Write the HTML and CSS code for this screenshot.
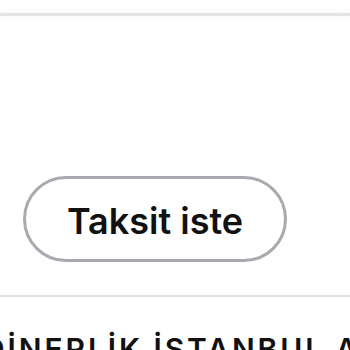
FILE: index.html
```html
<!DOCTYPE html>
<html lang="tr">
<head>
<meta charset="utf-8">
<link rel="stylesheet" href="styles.css">
</head>
<body>
<div class="page">
  <div class="top-rule"></div>
  <div class="card">
    <button class="pill">Taksit iste</button>
  </div>
  <div class="bottom-rule"></div>
  <div class="marquee"><span class="marquee-text">DİNERLİK İSTANBUL ANADOLU</span></div>
</div>
</body>
</html>
```
FILE: styles.css
```css
html, body {
  margin: 0;
  padding: 0;
  background: #ffffff;
  overflow: hidden;
}
.page {
  width: 350px;
  height: 350px;
  overflow: hidden;
  font-family: Inter, "Noto Sans", sans-serif;
}
.top-rule {
  margin-top: 13px;
  height: 3px;
  background: #e4e4e4;
  box-shadow: 0 2px 6px rgba(0,0,0,0.04), 0 -2px 6px rgba(0,0,0,0.03);
}
.card {
  height: 279px;
  display: flex;
  align-items: flex-end;
  padding: 0 0 33px 23px;
  box-sizing: border-box;
}
.pill {
  width: 264px;
  height: 86px;
  border: 3.5px solid #a9a9b0;
  border-radius: 43px;
  background: #fff;
  font-family: Inter, "Noto Sans", sans-serif;
  font-size: 36px;
  font-weight: 600;
  color: #111;
  padding: 3px 0 0 0;
  letter-spacing: 0;
}
.bottom-rule {
  height: 2px;
  background: #e2e2e2;
  box-shadow: 0 -2px 5px rgba(0,0,0,0.03);
}
.marquee {
  white-space: nowrap;
  padding-top: 37px;
}
.marquee-text {
  display: inline-block;
  margin-left: -17px;
  font-size: 30px;
  font-weight: 600;
  letter-spacing: 2.9px;
  color: #111;
  line-height: 1;
}
```
